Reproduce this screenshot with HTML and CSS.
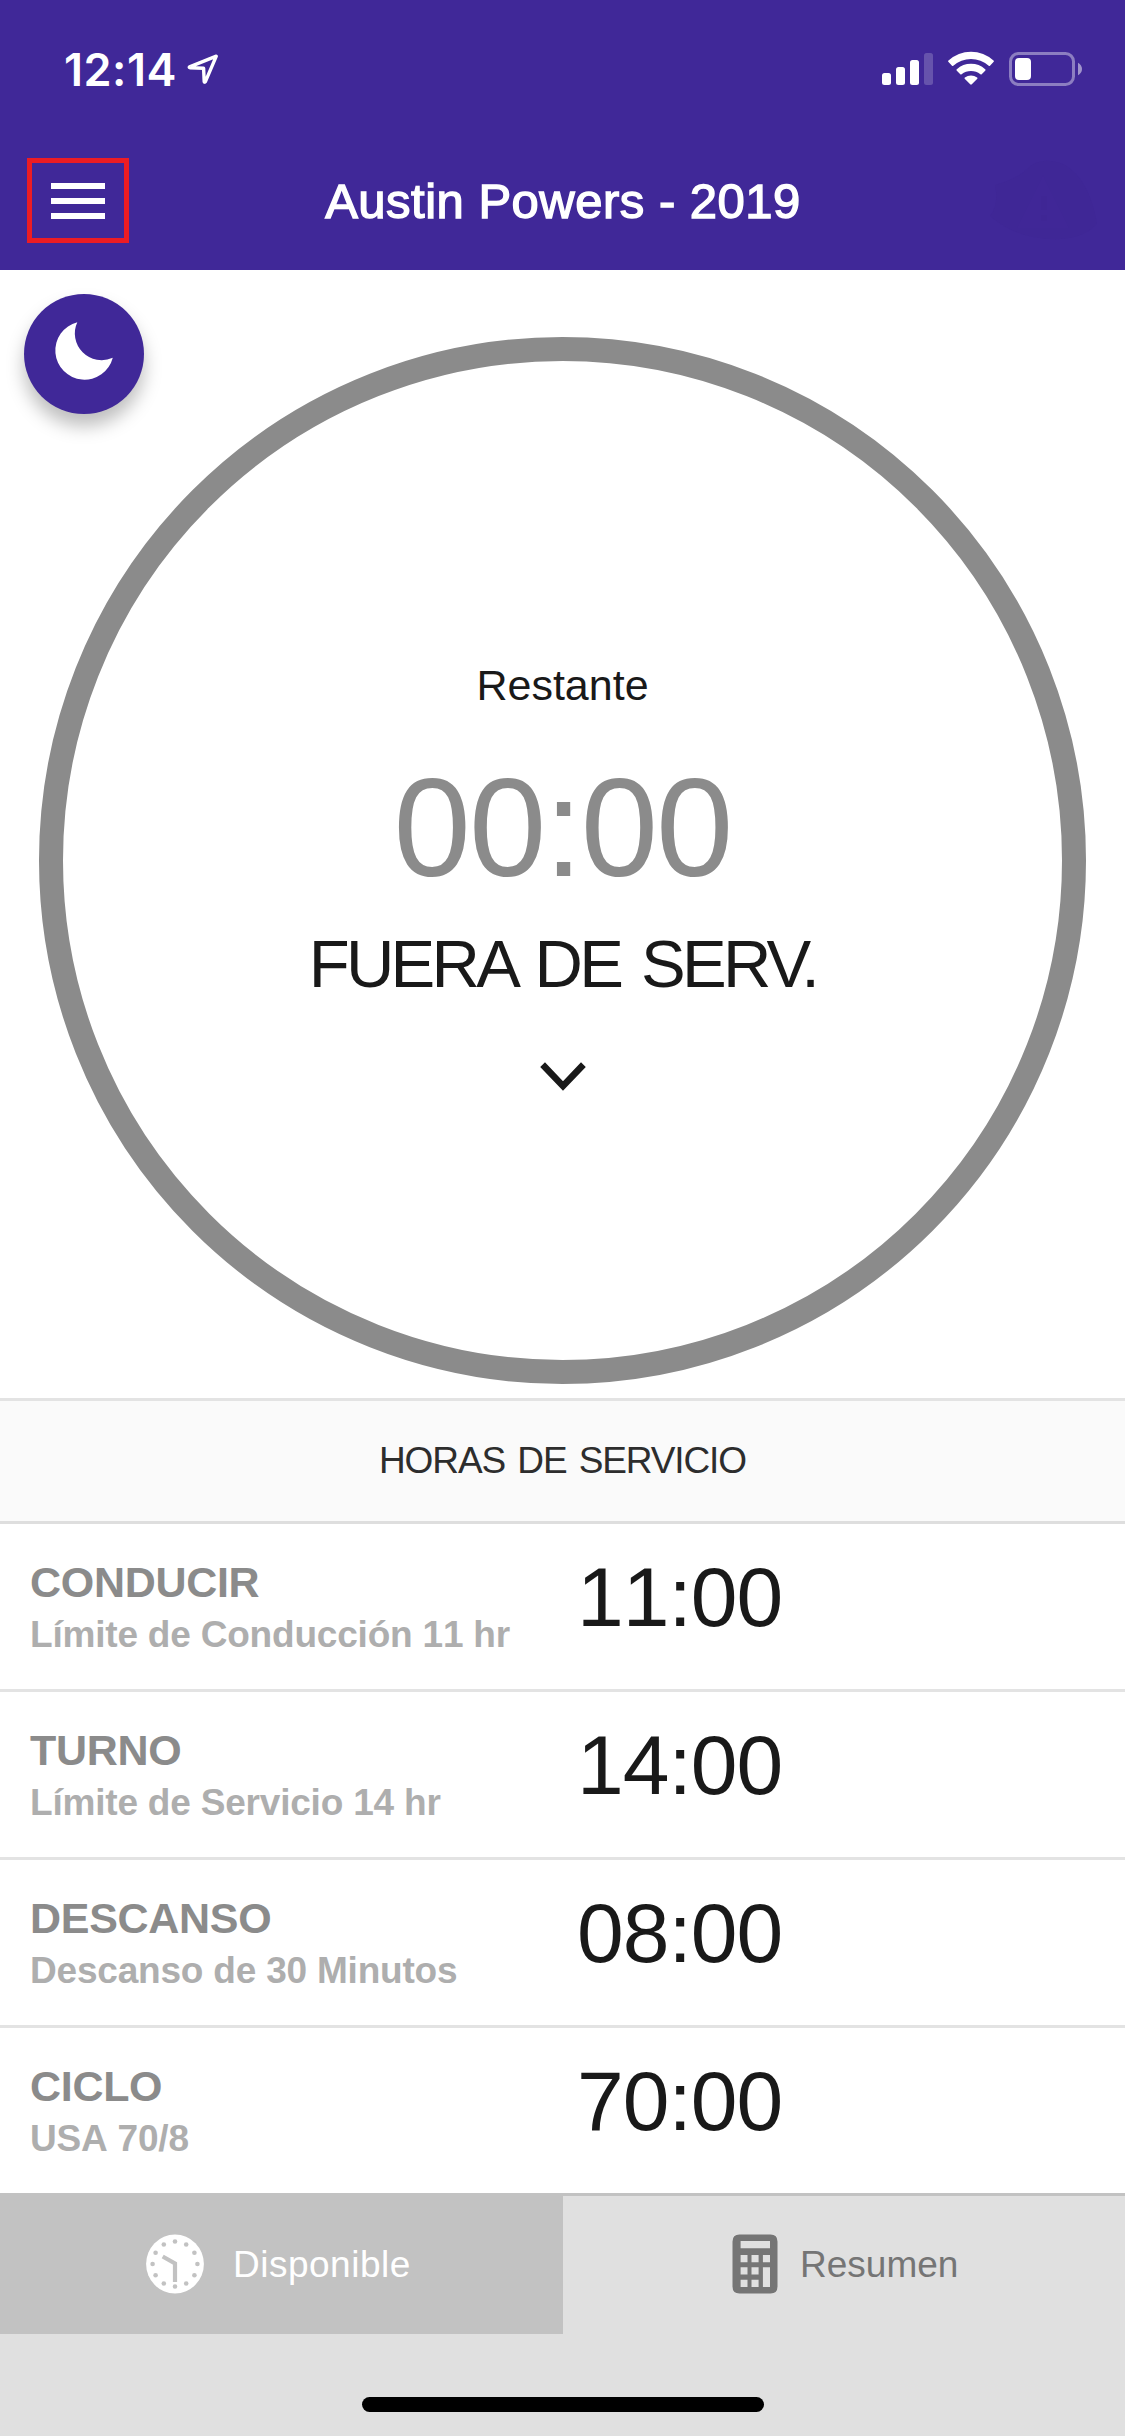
FILE: index.html
```html
<!DOCTYPE html>
<html lang="es">
<head>
<meta charset="utf-8">
<title>Horas de servicio</title>
<link rel="stylesheet" href="styles.css">
</head>
<body>
<header class="header">
  <div class="status">
    <div class="status-left">
      <span class="clock">12:14</span>
      <svg class="location" width="34" height="34" viewBox="0 0 34 34"><path d="M30.3 4.2 3.6 14.8Q2.8 15.5 3.8 15.7L17.6 16.3 18.2 29.6Q18.6 30.7 19.3 29.8Z" fill="none" stroke="#fff" stroke-width="3.4" stroke-linejoin="round"/></svg>
    </div>
    <svg class="status-icons" width="202" height="36" viewBox="0 0 202 36">
      <g fill="#fff">
        <rect x="2" y="22" width="9" height="12" rx="2.5"/>
        <rect x="16" y="16" width="9" height="18" rx="2.5"/>
        <rect x="30" y="9" width="9" height="25" rx="2.5"/>
        <rect x="44" y="2" width="9" height="32" rx="2.5" opacity=".2"/>
        <path d="M68.3 10.8Q67.8 10.2 68.5 9.6A33 33 0 0 1 113.5 9.6Q114.2 10.2 113.7 10.8L110 14.7Q109.4 15.2 108.7 14.7A26.5 26.5 0 0 0 73.3 14.7Q72.6 15.2 72 14.7Z"/>
        <path d="M76.6 19.5Q76.1 18.8 76.8 18.2A21.5 21.5 0 0 1 105.2 18.2Q105.9 18.8 105.4 19.5L101.7 23.2Q101.1 23.6 100.4 23.2A15 15 0 0 0 81.6 23.2Q80.9 23.6 80.3 23.2Z"/>
        <path d="M84.7 27.7Q84.1 27.1 84.9 26.5A10 10 0 0 1 97.1 26.5Q97.9 27.1 97.3 27.7L91.8 33.3Q91 34 90.2 33.3Z"/>
        <rect x="135" y="7" width="16" height="22" rx="4"/>
        <path d="M198 11.7Q202 14 202 18T198 24.3Z" opacity=".5"/>
      </g>
      <rect x="130.5" y="2.5" width="63" height="31" rx="8" fill="none" stroke="#fff" stroke-width="3" opacity=".4"/>
    </svg>
  </div>
  <div class="nav">
    <button class="menu" aria-label="Menú"><span></span><span></span><span></span></button>
    <h1 class="title">Austin Powers - 2019</h1>
    <svg class="alert" width="110" height="84" viewBox="0 0 110 84"><path d="M6 26Q28 20 38 10Q52-4 76 6Q100 20 108 64Q98 78 72 80Q30 82 1 57Q10 46 6 26Z" fill="#3f2796"/><path d="M54 16 80 69H28Z" fill="#402797"/><path d="M52 37h6v14h-6zM52 56h6v6h-6z" fill="#3f2695"/></svg>
  </div>
</header>

<main>
  <section class="dial">
    <button class="night" aria-label="Modo nocturno">
      <svg width="120" height="120" viewBox="24 294 120 120"><path d="M77.3 322.2A29.2 29.2 0 1 0 112.8 357.8A26.8 26.8 0 0 1 77.3 322.2Z" fill="#fff"/></svg>
    </button>
    <div class="ring">
      <div class="remaining">Restante</div>
      <div class="countdown">00:00</div>
      <div class="duty">FUERA DE SERV.</div>
      <svg class="chevron" width="46" height="29" viewBox="0 0 46 29"><path d="M2.6 2.6 23 24 43.4 2.6" fill="none" stroke="#191919" stroke-width="6.6"/></svg>
    </div>
  </section>

  <h2 class="section">HORAS DE SERVICIO</h2>
  <div class="row"><div class="label"><div class="name">CONDUCIR</div><div class="limit">Límite de Conducción 11 hr</div></div><div class="time">11:00</div></div>
  <div class="row"><div class="label"><div class="name">TURNO</div><div class="limit">Límite de Servicio 14 hr</div></div><div class="time">14:00</div></div>
  <div class="row"><div class="label"><div class="name">DESCANSO</div><div class="limit">Descanso de 30 Minutos</div></div><div class="time">08:00</div></div>
  <div class="row"><div class="label"><div class="name">CICLO</div><div class="limit">USA 70/8</div></div><div class="time">70:00</div></div>
</main>

<footer class="footer">
  <nav class="tabs">
    <a class="tab active">
      <svg width="58" height="60" viewBox="-29 -30 58 60">
        <ellipse rx="28.9" ry="29.5" fill="#fff"/>
        <g fill="#c2c2c2">
          <circle cy="-22.5" r="2.3"/><circle cx="11.2" cy="-19.5" r="2.3"/><circle cx="19.4" cy="-11.2" r="2.3"/>
          <circle cx="22.4" r="2.3"/><circle cx="19.4" cy="11.2" r="2.3"/><circle cx="11.2" cy="19.5" r="2.3"/>
          <circle cy="22.5" r="2.3"/><circle cx="-11.2" cy="19.5" r="2.3"/><circle cx="-19.4" cy="11.2" r="2.3"/>
          <circle cx="-22.4" r="2.3"/><circle cx="-19.4" cy="-11.2" r="2.3"/><circle cx="-11.2" cy="-19.5" r="2.3"/>
        </g>
        <path d="M-12.3-7.5 0-.5V18" fill="none" stroke="#c2c2c2" stroke-width="4.2"/>
      </svg>
      <span>Disponible</span>
    </a>
    <a class="tab summary">
      <svg width="46" height="60" viewBox="0 0 46 60">
        <path fill="#757575" fill-rule="evenodd" d="M7.5.5H38.5Q45.5.5 45.5 7.5V52.5Q45.5 59.5 38.5 59.5H7.5Q.5 59.5.5 52.5V7.5Q.5.5 7.5.5ZM8.6 7V14.3H38V7ZM8.6 21V28.3H15.5V21ZM19.5 21V28.3H26.6V21ZM30.9 21V28.3H38V21ZM8.6 33.3V40.6H15.5V33.3ZM19.5 33.3V40.6H26.6V33.3ZM30.9 33.3V53H38V33.3ZM8.6 45.7V53H15.5V45.7ZM19.5 45.7V53H26.6V45.7Z"/>
      </svg>
      <span>Resumen</span>
    </a>
  </nav>
  <div class="home"></div>
</footer>
</body>
</html>
```

FILE: styles.css
```css
* { box-sizing: border-box; }

body {
  margin: 0;
  width: 1125px;
  height: 2436px;
  display: flex;
  flex-direction: column;
  background: #fff;
  color: #191919;
  font-family: "Liberation Sans", Arial, sans-serif;
}

svg { display: block; flex: none; }
button { border: 0; padding: 0; }

.header {
  height: 270px;
  background: #402898;
  color: #fff;
}

.status {
  height: 132px;
  padding: 6px 43px 0 64px;
  display: flex;
  align-items: center;
  justify-content: space-between;
}
.status-left { display: flex; align-items: center; gap: 9px; }
.clock {
  font: 600 45px "Inter", sans-serif;
  letter-spacing: .5px;
}

.nav {
  height: 137px;
  padding: 0 26px 0 27px;
  display: grid;
  grid-template-columns: 110px 1fr 110px;
  align-items: center;
}
.menu {
  width: 102px;
  height: 85px;
  border: 5px solid #ed1c24;
  background: none;
  display: flex;
  flex-direction: column;
  align-items: center;
  justify-content: center;
  gap: 9px;
}
.menu span { width: 54px; height: 6px; background: #fff; }
.title {
  margin: 0;
  text-align: center;
  font-size: 49px;
  font-weight: 400;
  letter-spacing: .5px;
  -webkit-text-stroke: 1.4px #fff;
}

.dial {
  position: relative;
  height: 1128px;
  padding-top: 67px;
}
.night {
  position: absolute;
  left: 24px;
  top: 24px;
  width: 120px;
  height: 120px;
  border-radius: 50%;
  background: #402898;
  box-shadow: 0 12px 18px rgba(0, 0, 0, .26);
}
.ring {
  width: 1047px;
  height: 1047px;
  margin: 0 auto;
  padding-top: 299px;
  border: 24px solid #8b8b8b;
  border-radius: 50%;
  display: flex;
  flex-direction: column;
  align-items: center;
  white-space: nowrap;
}
.remaining { font-size: 43px; line-height: 50px; letter-spacing: 0; }
.countdown {
  margin-top: 48px;
  font-size: 139px;
  line-height: 140px;
  letter-spacing: -2px;
  color: #8b8b8b;
}
.duty {
  margin-top: 26px;
  font-size: 67px;
  line-height: 80px;
  letter-spacing: -3.7px;
  word-spacing: 6px;
}
.chevron { margin-top: 58px; }

.section {
  margin: 0;
  height: 126px;
  border-top: 3px solid #e3e3e3;
  border-bottom: 3px solid #dedede;
  background: #fafafa;
  color: #2d2d2d;
  font-size: 37px;
  font-weight: 400;
  line-height: 120px;
  letter-spacing: -1.1px;
  word-spacing: 3px;
  text-align: center;
}

.row {
  height: 168px;
  padding-left: 30px;
  border-bottom: 3px solid #e3e3e3;
  display: grid;
  grid-template-columns: 547px 1fr;
  font-kerning: none;
}
.row:last-child { height: 165px; border-bottom: 0; }
.label { padding-top: 31px; font-weight: 700; }
.name { font-size: 43px; line-height: 54px; letter-spacing: -.3px; color: #8b8b8b; }
.limit { font-size: 37px; line-height: 52px; letter-spacing: -.2px; color: #aeaeae; }
.time { padding-top: 28px; font-size: 84px; line-height: 90px; letter-spacing: -1px; }

.footer {
  flex: 1;
  background: #e0e0e0;
  border-top: 3px solid #c2c2c2;
}
.tabs { height: 138px; display: grid; grid-template-columns: 563px 562px; }
.tab {
  display: flex;
  align-items: center;
  padding-bottom: 2px;
  font-size: 37px;
  color: #757575;
}
.tab span { padding-top: 2px; }
.active {
  padding-left: 146px;
  gap: 29px;
  background: #c2c2c2;
  color: #fff;
  letter-spacing: .5px;
}
.summary { padding-left: 169px; gap: 22px; letter-spacing: 0; }
.home {
  width: 402px;
  height: 15px;
  margin: 63px auto 0;
  border-radius: 8px;
  background: #000;
}
```
